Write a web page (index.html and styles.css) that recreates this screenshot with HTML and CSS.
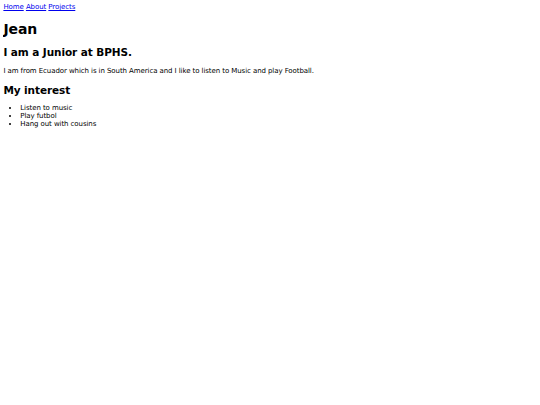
FILE: index.html
```
<!DOCTYPE html>
<html>
<head>
<meta charset="utf-8">
<title>Jean</title>
<link rel="stylesheet" href="styles.css">
</head>
<body>
<nav class="nav"><a href="#">Home</a> <a href="#">About</a> <a href="#">Projects</a></nav>
<h1 class="title">Jean</h1>
<h2 class="subtitle">I am a Junior at BPHS.</h2>
<p class="intro">I am from Ecuador which is in South America and I like to listen to Music and play Football.</p>
<h2 class="subtitle">My interest</h2>
<ul class="interests">
<li>Listen to music</li>
<li>Play futbol</li>
<li>Hang out with cousins</li>
</ul>
</body>
</html>
```
FILE: styles.css
```
html {
  background: #fff;
}
body {
  margin: 3.375px;
  font-family: "DejaVu Sans", sans-serif;
  font-size: 7px;
  letter-spacing: -0.08px;
  color: #000;
}
.nav a {
  color: #0000ee;
}
.title {
  font-size: 2em;
  margin: 0.67em 0;
}
.subtitle {
  font-size: 1.5em;
  margin: 0.83em 0;
}
.intro {
  margin: 1em 0;
}
.interests {
  margin: 1em 0;
  padding-left: 16.875px;
}
```
